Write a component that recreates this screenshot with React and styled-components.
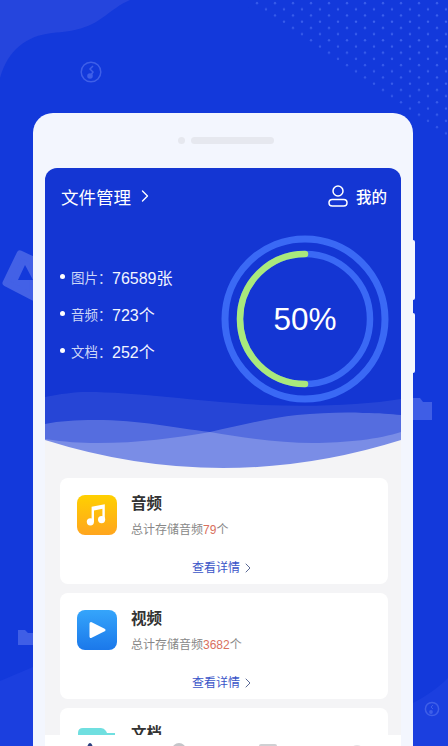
import styled, { createGlobalStyle } from "styled-components";
import { ChevronRight } from "lucide-react";

const stats = [
	{ label: "图片", value: "76589张" },
	{ label: "音频", value: "723个" },
	{ label: "文档", value: "252个" },
];

const cards = [
	{ title: "音频", count: "79", kind: "music" },
	{ title: "视频", count: "3682", kind: "video" },
];

const GlobalStyle = createGlobalStyle`
	html, body {
		margin: 0;
		height: 746px;
		overflow: hidden;
	}
	body {
		font-family: "Liberation Sans", "Noto Sans CJK SC", sans-serif;
	}
	* {
		box-sizing: border-box;
	}
`;

const Backdrop = () => (
	<BackdropSvg viewBox="0 0 448 746">
		<defs>
			<pattern id="dots" width="18" height="12.4" patternUnits="userSpaceOnUse">
				<circle cx="5" cy="3" r="1.2" fill="#4468f0" />
				<circle cx="14" cy="9.2" r="1.2" fill="#4468f0" />
			</pattern>
			<linearGradient id="fade" x1="0.1" y1="0.8" x2="0.6" y2="0.2">
				<stop offset="0" stopColor="#fff" stopOpacity="0.45" />
				<stop offset="1" stopColor="#fff" stopOpacity="0.85" />
			</linearGradient>
			<mask id="dotsMask">
				<path d="M238 0 L448 138 L448 0 Z" fill="url(#fade)" />
			</mask>
		</defs>
		<path
			d="M0 78 C8 50 26 36 52 33 C76 31 88 28 102 18 C112 11 120 4 130 0 L0 0 Z"
			fill="#2545dd"
		/>
		<path d="M0 681 L33 667 L33 746 L0 746 Z" fill="#1b3fdf" />
		<path d="M413 703 C425 697 438 688 448 678 L448 746 L413 746 Z" fill="#1b3fdf" />
		<rect width="448" height="140" fill="url(#dots)" mask="url(#dotsMask)" />

		<g fill="none" stroke="#3f5fe8" strokeWidth="1.5">
			<circle cx="91" cy="72" r="9.8" />
			<circle cx="432" cy="709" r="6.6" />
		</g>
		<path d="M93 66 L90 69 L93 72 L91 75" fill="none" stroke="#3f5fe8" strokeWidth="1.5" />
		<circle cx="90" cy="76" r="2.8" fill="#3f5fe8" />
		<path d="M433 705 L431 707 L433 709" fill="none" stroke="#3f5fe8" strokeWidth="1" />
		<circle cx="431" cy="712" r="1.9" fill="#3f5fe8" />

		<path
			d="M20 254 L6 283 L33 297 L33 260 Z"
			fill="#4361e6"
			stroke="#4361e6"
			strokeWidth="7"
			strokeLinejoin="round"
		/>
		<path d="M25 265 L18 280 L33 280 Z" fill="#1339db" />

		<path d="M18 630 L25 630 L28 633 L33 633 L33 645 L18 645 Z" fill="#3f5ee6" />
		<path d="M413 398 L420 398 L423 402 L432 402 L432 420 L413 420 Z" fill="#3f5ee6" />
	</BackdropSvg>
);

const UserIcon = () => (
	<svg width="20" height="22" viewBox="0 0 20 22" fill="none" stroke="#fff" strokeWidth="1.5">
		<circle cx="10" cy="6" r="5" />
		<rect x="1" y="14.5" width="18" height="6.5" rx="3.25" />
	</svg>
);

const Ring = () => (
	<RingBox>
		<svg width="168" height="168" viewBox="0 0 168 168" fill="none">
			<circle cx="84" cy="84" r="80" stroke="#3a69f5" strokeWidth="7" />
			<circle cx="84" cy="84" r="65" stroke="#3a69f5" strokeWidth="6.5" />
			<path
				d="M84 19 A65 65 0 0 0 84 149"
				stroke="#a9e97c"
				strokeWidth="6.5"
				strokeLinecap="round"
			/>
		</svg>
		<RingLabel>50%</RingLabel>
	</RingBox>
);

const Waves = () => (
	<WaveSvg viewBox="0 0 356 76">
		<path
			d="M0 5 C15 2 30 0 42 0 C90 0 160 10 218 13 C270 15 320 13 356 7 L356 76 L0 76 Z"
			fill="#fff"
			fillOpacity="0.08"
		/>
		<path
			d="M0 32 C15 29 30 28 50 28 C95 28 130 36 165 40 C200 46 235 51 268 51 C300 51 335 47 356 40 L356 76 L0 76 Z"
			fill="#fff"
			fillOpacity="0.22"
		/>
		<path
			d="M0 47 C20 50 35 51 52 51 C95 51 130 46 165 40 C195 33 225 26 252 23 C275 21 300 20 318 21 C335 21 345 22 356 23 L356 76 L0 76 Z"
			fill="#fff"
			fillOpacity="0.22"
		/>
		<path d="M0 48 Q178 104 356 48 L356 76 L0 76 Z" fill="#f4f4f6" />
	</WaveSvg>
);

const MusicGlyph = () => (
	<svg width="24" height="24" viewBox="0 0 24 24" fill="#fff">
		<path d="M6.6 3.8 L19.8 1.2 L19.8 16.4 L17.4 16.4 L17.4 5.8 L9 7.4 L9 19 L6.6 19 Z" />
		<circle cx="5.4" cy="18.8" r="3.6" />
		<circle cx="16.6" cy="16.6" r="3.6" />
	</svg>
);

const PlayGlyph = () => (
	<svg width="20" height="20" viewBox="0 0 20 20" fill="#fff" stroke="#fff" strokeWidth="3" strokeLinejoin="round">
		<path d="M4 3.5 L17 10 L4 16.5 Z" />
	</svg>
);

const FolderGlyph = () => (
	<FolderSvg width="40" height="40" viewBox="0 0 40 40">
		<path d="M1 8 Q1 3 6 3 L24 3 Q27 3 29 6 L30 8 L38 8 L38 40 L1 40 Z" fill="#70dfe0" />
	</FolderSvg>
);

const FileCard = ({ title, count, kind }) => (
	<Card>
		<CardMain>
			<IconTile $kind={kind}>{kind === "music" ? <MusicGlyph /> : <PlayGlyph />}</IconTile>
			<div>
				<CardTitle>{title}</CardTitle>
				<CardSub>
					总计存储音频<Count>{count}</Count>个
				</CardSub>
			</div>
		</CardMain>
		<DetailLink>
			查看详情
			<ChevronRight size={16} strokeWidth={1.5} />
		</DetailLink>
	</Card>
);

const App = () => {
	return (
		<>
			<GlobalStyle />
			<Page>
				<Backdrop />
				<Phone>
					<SideKey $top={127} />
					<SideKey $top={200} />
					<Speaker>
						<Camera />
						<Grille />
					</Speaker>
					<Screen>
						<Hero>
							<TopBar>
								<PageTitle>
									文件管理
									<ChevronRight size={20} strokeWidth={1.6} />
								</PageTitle>
								<Mine>
									<UserIcon />
									我的
								</Mine>
							</TopBar>
							<Summary>
								<StatList>
									{stats.map((s) => (
										<Stat key={s.label}>
											<StatLabel>{s.label}：</StatLabel>
											{s.value}
										</Stat>
									))}
								</StatList>
								<Ring />
							</Summary>
							<Waves />
						</Hero>
						<CardList>
							{cards.map((c) => (
								<FileCard key={c.title} {...c} />
							))}
							<Card>
								<CardMain>
									<FolderGlyph />
									<div>
										<CardTitle>文档</CardTitle>
									</div>
								</CardMain>
							</Card>
						</CardList>
						<TabBar>
							<TabMark $shape="dot" />
							<TabMark $shape="round" />
							<TabMark $shape="box" />
							<TabMark $shape="faint" />
						</TabBar>
					</Screen>
				</Phone>
			</Page>
		</>
	);
};

export default App;

const Page = styled.div`
	position: relative;
	width: 448px;
	height: 746px;
	overflow: hidden;
	background: #1339db;
	padding: 113px 0 0 33px;
`;

const BackdropSvg = styled.svg`
	position: absolute;
	left: 0;
	top: 0;
	width: 448px;
	height: 746px;
`;

const Phone = styled.div`
	position: relative;
	width: 380px;
	height: 633px;
	padding: 0 12px;
	background: #f3f6fe;
	border-radius: 20px 20px 0 0;
`;

const SideKey = styled.div`
	position: absolute;
	right: -2px;
	top: ${(props) => props.$top}px;
	width: 2px;
	height: 60px;
	background: #f3f6fe;
	border-radius: 0 2px 2px 0;
`;

const Speaker = styled.div`
	height: 55px;
	padding-bottom: 1px;
	display: flex;
	align-items: center;
	justify-content: center;
	gap: 6px;
	margin-left: 5px;
`;

const Camera = styled.span`
	width: 7px;
	height: 7px;
	border-radius: 50%;
	background: #e6e8ef;
`;

const Grille = styled.span`
	width: 83px;
	height: 7px;
	border-radius: 4px;
	background: #e6e8ef;
`;

const Screen = styled.div`
	position: relative;
	height: 578px;
	overflow: hidden;
	background: #f4f4f6;
	border-radius: 12px 12px 0 0;
`;

const Hero = styled.div`
	position: relative;
	height: 300px;
	padding: 15px 14px 0 16px;
	background: #1436d3;
	color: #fff;
`;

const WaveSvg = styled.svg`
	position: absolute;
	left: 0;
	bottom: 0;
	width: 356px;
	height: 76px;
	display: block;
`;

const TopBar = styled.div`
	display: flex;
	justify-content: space-between;
	align-items: center;
	height: 26px;
`;

const PageTitle = styled.div`
	display: flex;
	align-items: center;
	gap: 4px;
	font-size: 17.5px;
	font-weight: 400;
	color: #fff;
`;

const Mine = styled.div`
	display: flex;
	align-items: center;
	gap: 8px;
	font-size: 15.5px;
	font-weight: 500;
`;

const Summary = styled.div`
	position: relative;
	z-index: 1;
	display: flex;
	justify-content: space-between;
	align-items: center;
	margin-top: 26px;
	margin-right: -2px;
`;

const StatList = styled.ul`
	list-style: none;
	margin: 0;
	padding: 0 0 11px 0;
	display: flex;
	flex-direction: column;
	gap: 14px;
`;

const Stat = styled.li`
	display: flex;
	align-items: center;
	height: 23px;
	font-size: 16px;
	color: #f2f5ff;
	white-space: nowrap;

	&::before {
		content: "";
		width: 5px;
		height: 5px;
		margin: 0 6px 0 -1px;
		border-radius: 50%;
		background: #fff;
	}
`;

const StatLabel = styled.span`
	font-size: 13.5px;
	width: 41px;
	color: #cdd7f7;
`;

const RingBox = styled.div`
	position: relative;
	width: 168px;
	height: 168px;
	display: flex;
	align-items: center;
	justify-content: center;

	svg {
		position: absolute;
		left: 0;
		top: 0;
	}
`;

const RingLabel = styled.div`
	font-size: 31.5px;
	color: #fff;
`;

const CardList = styled.div`
	display: flex;
	flex-direction: column;
	gap: 9.5px;
	padding: 10px 13px 0 15px;
`;

const Card = styled.div`
	flex: none;
	height: 105.5px;
	padding: 17px 17px 0;
	background: #fff;
	border-radius: 8px;
	display: flex;
	flex-direction: column;
`;

const CardMain = styled.div`
	display: flex;
	gap: 14px;
`;

const IconTile = styled.div`
	width: 40px;
	height: 40px;
	flex: none;
	border-radius: 8px;
	display: flex;
	align-items: center;
	justify-content: center;
	background: ${(props) =>
		props.$kind === "music"
			? "linear-gradient(180deg, #ffd000, #ffa51e)"
			: "linear-gradient(180deg, #35a5fb, #1b78ea)"};
`;

const FolderSvg = styled.svg`
	flex: none;
	display: block;
`;

const CardTitle = styled.div`
	font-size: 15.5px;
	line-height: 20px;
	font-weight: 700;
	color: #333;
	margin-top: -1px;
`;

const CardSub = styled.div`
	margin-top: 8px;
	font-size: 12px;
	line-height: 16px;
	color: #888;
	white-space: nowrap;
`;

const Count = styled.span`
	color: #d9705e;
`;

const DetailLink = styled.div`
	display: flex;
	align-items: center;
	justify-content: center;
	margin-top: auto;
	margin-bottom: 8px;
	gap: 0;
	font-size: 12px;
	line-height: 16px;
	color: #3a55c8;

	svg {
		color: #5b6a96;
	}
`;

const TabBar = styled.div`
	position: absolute;
	left: 0;
	right: 0;
	bottom: 0;
	height: 11px;
	padding-top: 8px;
	background: #fff;
	display: grid;
	grid-template-columns: repeat(4, 1fr);
	justify-items: center;
`;

const TabMark = styled.span`
	width: ${(props) => (props.$shape === "box" ? "18px" : props.$shape === "dot" ? "6px" : "14px")};
	height: 14px;
	border-radius: ${(props) => (props.$shape === "box" ? "2px" : "50%")};
	margin-top: ${(props) => (props.$shape === "box" ? "1px" : props.$shape === "faint" ? "2px" : "0")};
	background: ${(props) =>
		props.$shape === "dot"
			? "#2b3f7e"
			: props.$shape === "round"
			? "#c4c5c9"
			: props.$shape === "box"
			? "#cfd0d3"
			: "#e4e4e6"};
`;
